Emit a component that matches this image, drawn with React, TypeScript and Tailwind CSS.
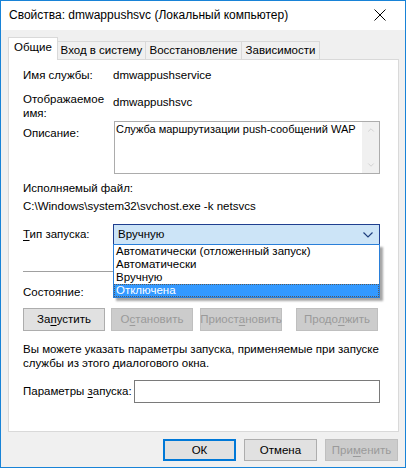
import { ChevronDown, ChevronUp } from "lucide-react";

const font = { fontFamily: '"Liberation Sans", Arial, sans-serif' };

function Btn({
  children,
  disabled,
  className = "",
}: {
  children: React.ReactNode;
  disabled?: boolean;
  className?: string;
}) {
  return (
    <div
      className={
        "flex h-[23px] w-[82px] items-center justify-center border " +
        (disabled
          ? "border-[#bfbfbf] bg-[#cccccc] text-[#9a9a9a]"
          : "border-[#adadad] bg-[#e1e1e1] text-black") +
        " " +
        className
      }
    >
      {children}
    </div>
  );
}

export default function App() {
  return (
    <div
      style={font}
      className="flex h-[468px] w-[406px] flex-col whitespace-nowrap border border-[#1883d7] bg-[#f0f0f0] text-[11.5px] leading-[15px] text-black"
    >
      {/* title bar */}
      <div className="flex h-[29px] shrink-0 items-center justify-between bg-white pl-[8px] pr-[19px]">
        <div className="text-[12px]">Свойства: dmwappushsvc (Локальный компьютер)</div>
        <svg width="12" height="12" viewBox="0 0 12 12" className="mb-[1px]">
          <path d="M0.5 0.5 L11.5 11.5 M11.5 0.5 L0.5 11.5" stroke="#000" strokeWidth="1" />
        </svg>
      </div>

      {/* tabs */}
      <div className="mt-[7px] flex h-[22px] items-end pl-[7px]">
        <div className="relative z-10 -mb-px flex h-[23px] w-[50px] items-center justify-center border border-b-0 border-[#d9d9d9] bg-white pb-[3px]">
          Общие
        </div>
        <div className="flex h-[18px] w-[88px] items-center justify-center border border-l-0 border-b-0 border-[#d9d9d9] bg-[#f0f0f0]">
          Вход в систему
        </div>
        <div className="flex h-[18px] w-[96px] items-center justify-center border border-l-0 border-b-0 border-[#d9d9d9] bg-[#f0f0f0]">
          Восстановление
        </div>
        <div className="flex h-[18px] w-[78px] items-center justify-center border border-l-0 border-b-0 border-[#d9d9d9] bg-[#f0f0f0]">
          Зависимости
        </div>
      </div>

      {/* panel */}
      <div className="ml-[7px] flex h-[373px] w-[391px] flex-col border border-[#d9d9d9] bg-white pl-[14px] pr-[18px] pt-[8px]">
        <div className="flex">
          <div className="w-[90px]">Имя службы:</div>
          <div>dmwappushservice</div>
        </div>

        <div className="mt-[9px] flex">
          <div className="w-[90px] leading-[14px]">
            Отображаемое
            <br />
            имя:
          </div>
          <div className="mt-[3px]">dmwappushsvc</div>
        </div>

        <div className="mt-[1px] flex">
          <div className="mt-[5px] w-[91px]">Описание:</div>
          <div className="flex h-[53px] flex-1 border border-[#acacac] bg-white">
            <div className="flex-1 overflow-hidden pl-[1px] text-[11px]">
              Служба маршрутизации push-сообщений WAP
            </div>
            <div className="flex w-[17px] flex-col items-center justify-between bg-[#f0f0f0] py-[3px] text-[#c0c0c0]">
              <ChevronUp size={10} strokeWidth={1.5} />
              <ChevronDown size={10} strokeWidth={1.5} />
            </div>
          </div>
        </div>

        <div className="mt-[7px]">Исполняемый файл:</div>
        <div className="mt-[3px]">C:\Windows\system32\svchost.exe -k netsvcs</div>

        <div className="relative mt-[10px] flex items-center">
          <div className="w-[90px]">
            <span className="underline underline-offset-2">Т</span>ип запуска:
          </div>
          <div className="flex h-[21px] flex-1 items-center justify-between border border-[#1f3f8f] bg-[#cce4f7] pl-[4px] pr-[6px]">
            <span>Вручную</span>
            <svg width="10" height="6" viewBox="0 0 10 6">
              <path d="M0.5 0.5 L5 5 L9.5 0.5" fill="none" stroke="#1f3f7f" strokeWidth="1.2" />
            </svg>
          </div>
          {/* dropdown list */}
          <div className="absolute left-[90px] right-0 top-[20px] z-20 border border-[#2a7fd9] bg-white leading-[13px] shadow-[3px_3px_2px_rgba(0,0,0,0.35)]">
            <div className="h-[13px] pl-[2px]">Автоматически (отложенный запуск)</div>
            <div className="h-[13px] pl-[2px]">Автоматически</div>
            <div className="h-[13px] pl-[2px]">Вручную</div>
            <div className="h-[13px] border border-dotted border-[#5a5a5a] bg-[#3399ff] pl-[1px] leading-[11px] text-white">
              Отключена
            </div>
          </div>
        </div>

        <div className="mt-[26px] h-px bg-[#a0a0a0]" />

        <div className="mt-[13px]">Состояние:</div>

        <div className="mt-[8px] flex">
          <Btn>
            За<span className="underline underline-offset-2">п</span>устить
          </Btn>
          <Btn disabled className="ml-[6px]">
            О<span className="underline underline-offset-2">с</span>тановить
          </Btn>
          <Btn disabled className="ml-[7px]">
            Приост<span className="underline underline-offset-2">а</span>новить
          </Btn>
          <Btn disabled className="ml-[14px]">
            Продо<span className="underline underline-offset-2">л</span>жить
          </Btn>
        </div>

        <div className="mt-[11px] leading-[14px]">
          Вы можете указать параметры запуска, применяемые при запуске
          <br />
          службы из этого диалогового окна.
        </div>

        <div className="mt-[10px] flex items-center">
          <div className="w-[111px]">
            Параметры <span className="underline underline-offset-2">з</span>апуска:
          </div>
          <div className="h-[23px] flex-1 border border-[#7a7a7a] bg-white" />
        </div>
      </div>

      {/* footer */}
      <div className="mt-[7px] flex justify-end gap-[8px] pr-[7px]">
        <div className="flex h-[22px] w-[73px] items-center justify-center border-2 border-[#0078d7] bg-[#e1e1e1]">
          ОК
        </div>
        <div className="flex h-[22px] w-[73px] items-center justify-center border border-[#adadad] bg-[#e1e1e1]">
          Отмена
        </div>
        <div className="flex h-[22px] w-[73px] items-center justify-center border border-[#bfbfbf] bg-[#cccccc] text-[#9a9a9a]">
          При<span className="underline underline-offset-2">м</span>енить
        </div>
      </div>
    </div>
  );
}
